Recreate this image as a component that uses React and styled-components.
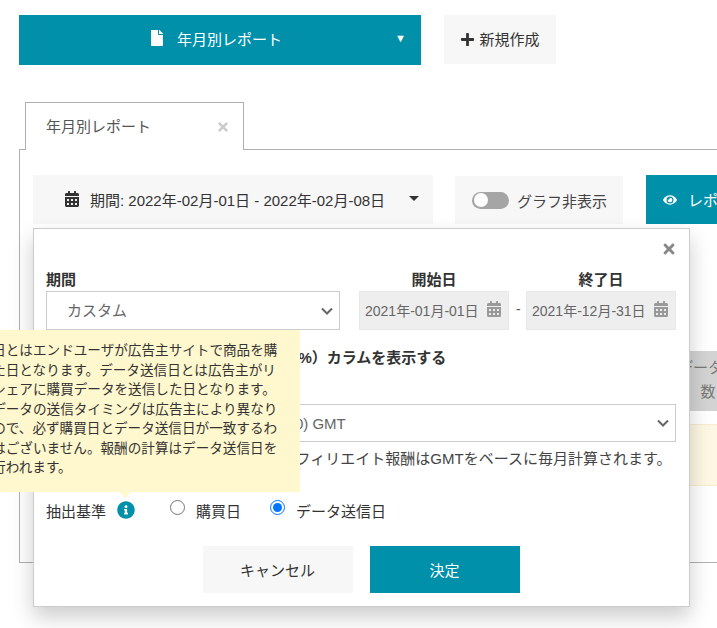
import React from "react";
import styled, { createGlobalStyle } from "styled-components";
import { FaFile, FaPlus, FaTimes, FaCalendarAlt, FaEye, FaInfoCircle } from "react-icons/fa";

const GlobalStyle = createGlobalStyle`
  html, body {
    margin: 0;
    padding: 0;
    background: #fff;
  }
  body {
    font-family: "Liberation Sans", "Noto Sans CJK JP", sans-serif;
    font-size: 15px;
    color: #333;
  }
  * { box-sizing: border-box; }
`;

const teal = "#0090aa";

const chevron =
  "url(\"data:image/svg+xml,%3Csvg xmlns='http://www.w3.org/2000/svg' width='12' height='8' viewBox='0 0 12 8'%3E%3Cpath d='M1 1.5l5 5 5-5' fill='none' stroke='%23666' stroke-width='2'/%3E%3C/svg%3E\")";

const Page = styled.div`
  position: relative;
  width: 717px;
  height: 628px;
  overflow: hidden;
  padding: 15px 0 0 19px;
`;

const TopBar = styled.div`
  display: flex;
  align-items: flex-start;
  gap: 23px;
`;

const ReportSelect = styled.div`
  position: relative;
  width: 402px;
  height: 50px;
  background: ${teal};
  color: #fff;
  display: flex;
  align-items: center;
  justify-content: center;
  gap: 12px;
  padding: 0 9px 3px 0;
  svg { font-size: 16px; margin-top: -1px; }
`;

const Caret = styled.span`
  position: absolute;
  right: 15px;
  top: 16px;
  font-size: 11px;
  line-height: 14px;
`;

const NewButton = styled.div`
  width: 112px;
  height: 49px;
  background: #f7f7f7;
  display: flex;
  align-items: center;
  justify-content: center;
  gap: 4px;
  padding-bottom: 3px;
  svg { font-size: 15px; color: #333; margin-top: 3px; }
`;

const TabStrip = styled.div`
  margin: 37px 0 0 6px;
  display: flex;
  position: relative;
  z-index: 1;
`;

const Tab = styled.div`
  width: 219px;
  height: 48px;
  background: #fff;
  border: 1px solid #b0b0b0;
  border-bottom: none;
  padding: 0 13px 2px 20px;
  color: #555;
  display: flex;
  align-items: center;
  justify-content: space-between;
  svg { font-size: 14px; color: #ccc; margin-top: 2px; }
`;

const Panel = styled.div`
  margin-top: -1px;
  width: 760px;
  height: 414px;
  border: 1px solid #b0b0b0;
  padding: 25px 0 0 13px;
`;

const FilterRow = styled.div`
  display: flex;
  align-items: flex-start;
`;

const DateRange = styled.div`
  width: 400px;
  height: 49px;
  background: #f7f7f7;
  display: flex;
  align-items: center;
  padding: 0 14px 1px 31px;
  font-size: 15px;
  white-space: nowrap;
  svg { font-size: 16px; margin-right: 10px; flex: none; }
`;

const DownCaret = styled.span`
  width: 0;
  height: 0;
  margin: 0 0 2px auto;
  border-left: 5px solid transparent;
  border-right: 5px solid transparent;
  border-top: 5px solid #333;
`;

const GraphToggle = styled.div`
  width: 168px;
  height: 48px;
  margin: 1px 23px 0 22px;
  background: #f7f7f7;
  display: flex;
  align-items: center;
  justify-content: center;
  gap: 8px;
  padding-left: 1px;
  color: #444;
  font-size: 15px;
`;

const Switch = styled.span`
  width: 37px;
  height: 17px;
  border-radius: 9px;
  background: #a5a5a5;
  padding: 1.5px 2px;
  &::before {
    content: "";
    display: block;
    width: 14px;
    height: 14px;
    border-radius: 50%;
    background: #fff;
  }
`;

const ViewButton = styled.div`
  width: 130px;
  height: 49px;
  background: ${teal};
  color: #fff;
  display: flex;
  align-items: center;
  gap: 11px;
  padding-left: 17px;
  white-space: nowrap;
  svg { font-size: 14px; flex: none; }
`;

const TableHead = styled.div`
  margin: 127px 0 0 627px;
  width: 96px;
  height: 60px;
  background: #d3d3d3;
  color: #777;
  text-align: center;
  font-size: 15px;
  line-height: 24px;
  padding: 5px 0 0 0;
`;

const NoticeBand = styled.div`
  margin: 13px 0 0 627px;
  width: 96px;
  height: 62px;
  background: #fdf7e3;
  border: 1px solid #f7ecd0;
`;

const Dialog = styled.div`
  position: absolute;
  left: 33px;
  top: 228px;
  width: 657px;
  height: 379px;
  background: #fff;
  border: 1px solid #ccc;
  box-shadow: 0 10px 20px rgba(0, 0, 0, 0.2);
  padding: 43px 13px 0 12px;
  z-index: 2;
`;

const CloseIcon = styled(FaTimes)`
  position: absolute;
  right: 12px;
  top: 12px;
  font-size: 16px;
  color: #888;
`;

const DateGrid = styled.div`
  display: grid;
  grid-template-columns: 296px 150px 150px;
  column-gap: 17px;
`;

const Field = styled.div`
  display: flex;
  flex-direction: column;
  position: relative;
`;

const FieldLabel = styled.label`
  font-weight: bold;
  font-size: 15px;
  line-height: 16px;
  margin-bottom: 3px;
  color: #333;
  text-align: ${(p) => (p.$center ? "center" : "left")};
`;

const Select = styled.select`
  appearance: none;
  width: ${(p) => p.$w || "100%"};
  height: ${(p) => p.$h || 39}px;
  background: #fff ${chevron} no-repeat right 6px center;
  border: 1px solid #ccc;
  border-radius: 0;
  padding: 0 24px 0 20px;
  color: #666;
  font-family: inherit;
  font-size: 15px;
  outline: none;
`;

const DateInput = styled.div`
  height: 39px;
  background: #eee;
  border: 1px solid #e8e8e8;
  color: #666;
  font-size: 14px;
  display: flex;
  align-items: center;
  justify-content: space-between;
  padding: 0 6px 2px 5px;
  svg { font-size: 16px; color: #999; margin-top: -1px; }
`;

const Dash = styled.span`
  position: absolute;
  left: -10px;
  top: 29px;
  font-size: 14px;
  color: #555;
`;

const CheckLine = styled.label`
  margin-top: 17px;
  display: flex;
  align-items: center;
  gap: 13px;
  font-weight: bold;
  font-size: 15px;
  line-height: 22px;
  color: #333;
  white-space: nowrap;
  input { margin: 0; width: 13px; height: 13px; }
`;

const ZoneLabel = styled.div`
  margin-top: 13px;
  height: 22px;
  line-height: 22px;
`;

const ZoneNote = styled.div`
  margin: 7px 0 0 -3px;
  font-size: 15px;
  line-height: 20px;
  color: #444;
  white-space: nowrap;
`;

const BasisRow = styled.div`
  margin-top: 29px;
  display: flex;
  align-items: center;
  height: 24px;
  color: #333;
`;

const InfoIcon = styled(FaInfoCircle)`
  font-size: 18px;
  color: ${teal};
  margin: 0 35px 0 11px;
`;

const RadioLabel = styled.label`
  display: flex;
  align-items: center;
  gap: 11px;
  margin-right: 29px;
  input { margin: 0 0 5px; width: 15px; height: 15px; }
`;

const ButtonRow = styled.div`
  margin-top: 24px;
  display: flex;
  justify-content: center;
  gap: 17px;
`;

const ActionButton = styled.button`
  width: 150px;
  height: 47px;
  border: none;
  font-family: inherit;
  font-size: 15px;
  background: ${(p) => (p.$primary ? teal : "#f7f7f7")};
  color: ${(p) => (p.$primary ? "#fff" : "#333")};
`;

const Tooltip = styled.div`
  position: absolute;
  left: -55px;
  top: 330px;
  width: 355px;
  height: 162px;
  background: #fff7cd;
  color: #333;
  font-size: 13.6px;
  line-height: 19.5px;
  padding: 11px 20px 0 20px;
  white-space: nowrap;
  z-index: 3;
  &::after {
    content: "";
    position: absolute;
    left: 174px;
    top: 100%;
    border-left: 6px solid transparent;
    border-right: 6px solid transparent;
    border-top: 6px solid #fff7cd;
  }
`;

const tipLines = [
  "購買日とはエンドユーザが広告主サイトで商品を購",
  "入した日となります。データ送信日とは広告主がリ",
  "ンクシェアに購買データを送信した日となります。",
  "なおデータの送信タイミングは広告主により異なり",
  "ますので、必ず購買日とデータ送信日が一致するわ",
  "けではございません。報酬の計算はデータ送信日を",
  "基に行われます。",
];

export default function App() {
  return (
    <Page>
      <GlobalStyle />
      <TopBar>
        <ReportSelect>
          <FaFile />
          年月別レポート
          <Caret>▼</Caret>
        </ReportSelect>
        <NewButton>
          <FaPlus />
          新規作成
        </NewButton>
      </TopBar>
      <TabStrip>
        <Tab>
          年月別レポート
          <FaTimes />
        </Tab>
      </TabStrip>
      <Panel>
        <FilterRow>
          <DateRange>
            <FaCalendarAlt />
            期間: 2022年-02月-01日 - 2022年-02月-08日
            <DownCaret />
          </DateRange>
          <GraphToggle>
            <Switch />
            グラフ非表示
          </GraphToggle>
          <ViewButton>
            <FaEye />
            レポート表示
          </ViewButton>
        </FilterRow>
        <TableHead>
          データ件
          <br />
          数
        </TableHead>
        <NoticeBand />
      </Panel>

      <Dialog>
        <CloseIcon />
        <DateGrid>
          <Field>
            <FieldLabel>期間</FieldLabel>
            <Select $w="294px" defaultValue="custom">
              <option value="custom">カスタム</option>
            </Select>
          </Field>
          <Field>
            <FieldLabel $center>開始日</FieldLabel>
            <DateInput>
              2021年-01月-01日
              <FaCalendarAlt />
            </DateInput>
          </Field>
          <Field>
            <FieldLabel $center>終了日</FieldLabel>
            <Dash>-</Dash>
            <DateInput>
              2021年-12月-31日
              <FaCalendarAlt />
            </DateInput>
          </Field>
        </DateGrid>
        <CheckLine>
          <input type="checkbox" />
          アフィリエイト報酬の消費税（10%）カラムを表示する
        </CheckLine>
        <ZoneLabel>タイムゾーン</ZoneLabel>
        <Select $h={38} defaultValue="gmt">
          <option value="gmt">グリニッジ標準時間帯 (UTC+00:00) GMT</option>
        </Select>
        <ZoneNote>
          表示するタイムゾーンに関わらず、アフィリエイト報酬はGMTをベースに毎月計算されます。
        </ZoneNote>
        <BasisRow>
          抽出基準
          <InfoIcon />
          <RadioLabel>
            <input type="radio" name="basis" />
            購買日
          </RadioLabel>
          <RadioLabel>
            <input type="radio" name="basis" defaultChecked />
            データ送信日
          </RadioLabel>
        </BasisRow>
        <ButtonRow>
          <ActionButton>キャンセル</ActionButton>
          <ActionButton $primary>決定</ActionButton>
        </ButtonRow>
      </Dialog>

      <Tooltip>
        {tipLines.map((line) => (
          <div key={line}>{line}</div>
        ))}
      </Tooltip>
    </Page>
  );
}
